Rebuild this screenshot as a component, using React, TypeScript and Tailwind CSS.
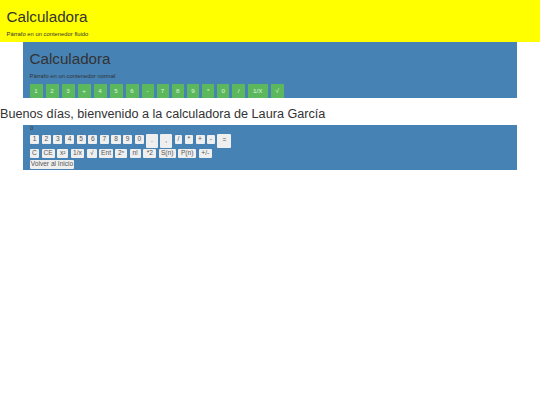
const greenKeys: [string, number][] = [
  ['1', 13], ['2', 13], ['3', 13], ['+', 13], ['4', 13], ['5', 13], ['6', 13], ['-', 12],
  ['7', 12.2], ['8', 12.2], ['9', 12.2], ['*', 12.2], ['0', 12.2], ['/', 12.2], ['1/X', 20], ['√', 13],
]

const digitKeys = ['1', '2', '3', '4', '5', '6', '7', '8', '9', '0']
const opKeys: [string, number][] = [['/', 7.5], ['*', 8.5], ['+', 9], ['-', 8]]
const funcKeys: [string, number][] = [
  ['C', 9], ['CE', 13], ['x²', 11], ['1/x', 13.4], ['√', 10], ['Ent', 13.4],
  ['2ⁿ', 11.6], ['n!', 11.3], ['*2', 12.7], ['S(n)', 17], ['P(n)', 17.7], ['+/-', 13.3],
]

function Key({ label, width, className = 'h-[9px]' }: { label: string; width: number; className?: string }) {
  return (
    <button
      style={{ width }}
      className={`${className} shrink-0 bg-[#efefef] text-[#555] text-[6.6px] leading-none rounded-[1px] flex items-center justify-center`}
    >
      {label}
    </button>
  )
}

export default function App() {
  return (
    <div className="min-h-[405px] bg-white text-[#333] font-['Liberation_Sans',Arial,sans-serif]">
      <div className="h-[42px] bg-[#ffff00] px-[6.5px] pt-[9px]">
        <h1 className="text-[15.2px] leading-[16px]">Calculadora</h1>
        <p className="mt-[5px] text-[5.85px] leading-[8px]">Párrafo en un contenedor fluido</p>
      </div>
      <div className="mx-[23px] h-[56px] bg-[#4682b4] px-[6.5px] pt-[9px]">
        <h1 className="text-[15.2px] leading-[16px]">Calculadora</h1>
        <p className="mt-[5px] text-[5.85px] leading-[8px]">Párrafo en un contenedor normal</p>
        <div className="mt-[4px] flex gap-[3px]">
          {greenKeys.map(([label, width], i) => (
            <button
              key={i}
              style={{ width }}
              className="h-[14px] shrink-0 bg-[#5cb85c] text-white/80 text-[6.2px] leading-none rounded-[1px] flex items-center justify-center"
            >
              {label}
            </button>
          ))}
        </div>
      </div>
      <h2 className="mt-[8px] text-[12.65px] leading-[16px]">Buenos días, bienvenido a la calculadora de Laura García</h2>
      <div className="mt-[3px] mx-[23px] h-[44.5px] bg-[#4682b4] px-[7px] flex flex-col">
        <div className="h-[9px] text-[5.85px] leading-[7px]">0</div>
        <div className="flex items-start gap-[2.45px]">
          {digitKeys.map(k => <Key key={k} label={k} width={9.2} className="mt-[1px] h-[9px]" />)}
          <Key label="." width={11.5} className="h-[13.5px]" />
          <Key label="," width={12} className="h-[13.5px]" />
          {opKeys.map(([k, w]) => <Key key={k} label={k} width={w} className="mt-[1px] h-[9px]" />)}
          <Key label="=" width={14} className="h-[13.5px]" />
        </div>
        <div className="mt-[1.5px] flex gap-[2.6px]">
          {funcKeys.map(([k, w]) => <Key key={k} label={k} width={w} />)}
        </div>
        <div className="mt-[2px] flex">
          <Key label="Volver al Inicio" width={44} />
        </div>
      </div>
    </div>
  )
}
